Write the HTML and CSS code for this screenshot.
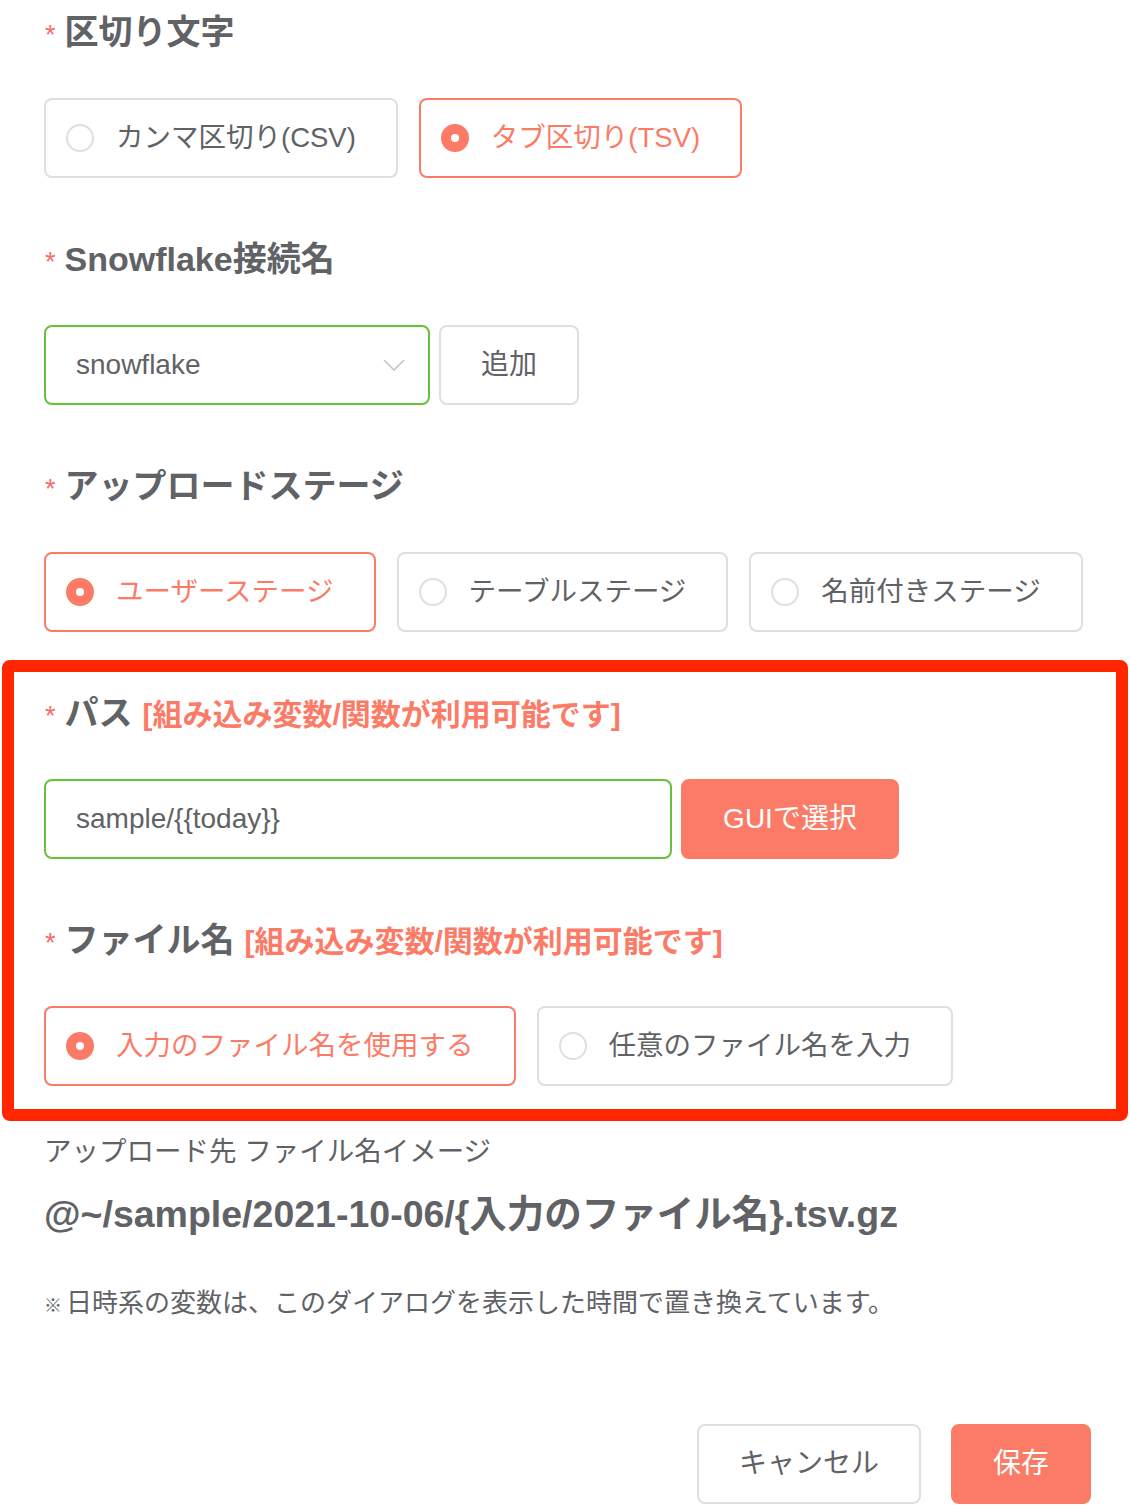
FILE: index.html
```html
<!DOCTYPE html>
<html lang="ja">
<head>
<meta charset="utf-8">
<title>アップロード設定</title>
<link rel="stylesheet" href="styles.css">
</head>
<body>
<div class="page">
  <div class="form-item">
    <div class="label"><span class="req">*</span>区切り文字</div>
    <div class="radio-group">
      <label class="radio"><span class="dot"></span><span class="radio-text">カンマ区切り(CSV)</span></label>
      <label class="radio is-checked"><span class="dot"></span><span class="radio-text">タブ区切り(TSV)</span></label>
    </div>
  </div>

  <div class="form-item">
    <div class="label"><span class="req">*</span>Snowflake接続名</div>
    <div class="control-row">
      <div class="select">
        <span class="field-text">snowflake</span>
        <svg class="chevron" width="22" height="12" viewBox="0 0 22 12"><polyline points="1,1 11,11 21,1" fill="none" stroke="#c0c4cc" stroke-width="1.6"/></svg>
      </div>
      <button class="btn">追加</button>
    </div>
  </div>

  <div class="form-item">
    <div class="label"><span class="req">*</span>アップロードステージ</div>
    <div class="radio-group">
      <label class="radio is-checked"><span class="dot"></span><span class="radio-text">ユーザーステージ</span></label>
      <label class="radio"><span class="dot"></span><span class="radio-text">テーブルステージ</span></label>
      <label class="radio"><span class="dot"></span><span class="radio-text">名前付きステージ</span></label>
    </div>
  </div>

  <div class="highlight">
    <div class="form-item">
      <div class="label"><span class="req">*</span>パス<span class="hint">[組み込み変数/関数が利用可能です]</span></div>
      <div class="control-row">
        <div class="input"><span class="field-text">sample/{{today}}</span></div>
        <button class="btn btn-primary btn-gui">GUIで選択</button>
      </div>
    </div>
    <div class="form-item last">
      <div class="label"><span class="req">*</span>ファイル名<span class="hint">[組み込み変数/関数が利用可能です]</span></div>
      <div class="radio-group">
        <label class="radio is-checked"><span class="dot"></span><span class="radio-text">入力のファイル名を使用する</span></label>
        <label class="radio"><span class="dot"></span><span class="radio-text">任意のファイル名を入力</span></label>
      </div>
    </div>
  </div>

  <div class="preview-label">アップロード先 ファイル名イメージ</div>
  <div class="preview-path">@~/sample/2021-10-06/{入力のファイル名}.tsv.gz</div>
  <div class="note"><span class="kome">※</span>日時系の変数は、このダイアログを表示した時間で置き換えています。</div>

  <div class="footer">
    <button class="btn">キャンセル</button>
    <button class="btn btn-primary">保存</button>
  </div>
</div>
</body>
</html>
```

FILE: styles.css
```css
* { box-sizing: border-box; }
html, body { margin: 0; padding: 0; background: #ffffff; }
body {
  width: 1130px;
  font-family: "Liberation Sans", "Noto Sans CJK JP", sans-serif;
  color: #606266;
}
.page { padding: 2px 39px 0 44px; }

.form-item { margin-bottom: 51px; }
.form-item.last { margin-bottom: 0; }

.label {
  height: 60px;
  line-height: 60px;
  margin-bottom: 36px;
  font-size: 34px;
  font-weight: bold;
  color: #606266;
  white-space: nowrap;
}
.req {
  color: #f56c6c;
  font-size: 27px;
  font-weight: normal;
  margin-right: 9px;
  margin-left: 1px;
}
.hint {
  color: #fc7b67;
  font-size: 30px;
  margin-left: 10px;
}

.radio-group { display: flex; gap: 21px; }
.radio {
  display: flex;
  align-items: center;
  height: 80px;
  padding: 0 40px 0 20px;
  border: 2px solid #dcdfe6;
  border-radius: 8px;
  font-size: 27.5px;
  color: #606266;
  white-space: nowrap;
  background: #fff;
}
.radio-text { line-height: 1; }
.dot {
  flex: none;
  width: 28px;
  height: 28px;
  margin-right: 22px;
  border: 2px solid #dcdfe6;
  border-radius: 50%;
  background: #fff;
}
.radio.is-checked { border-color: #fc7b67; color: #fc7b67; }
.radio.is-checked .dot {
  display: flex;
  align-items: center;
  justify-content: center;
  background: #fc7b67;
  border-color: #fc7b67;
}
.radio.is-checked .dot::after {
  content: "";
  width: 8px;
  height: 8px;
  border-radius: 50%;
  background: #fff;
}

.control-row { display: flex; gap: 9px; }
.field-text { line-height: 1; }
.select {
  width: 386px;
  height: 80px;
  display: flex;
  align-items: center;
  justify-content: space-between;
  padding: 0 23px 0 30px;
  border: 2px solid #67c23a;
  border-radius: 8px;
  font-size: 28px;
  color: #606266;
}
.chevron { display: block; }
.input {
  width: 628px;
  height: 80px;
  display: flex;
  align-items: center;
  padding: 0 30px;
  border: 2px solid #67c23a;
  border-radius: 8px;
  font-size: 28px;
  color: #606266;
}

.btn {
  height: 80px;
  padding: 0 40px;
  display: flex;
  align-items: center;
  justify-content: center;
  line-height: 1;
  border: 2px solid #dcdfe6;
  border-radius: 8px;
  background: #fff;
  color: #606266;
  font-family: "Liberation Sans", "Noto Sans CJK JP", sans-serif;
  font-size: 28px;
  white-space: nowrap;
}
.btn-primary {
  background: #fc7b67;
  border-color: #fc7b67;
  color: #ffffff;
}
.btn-gui { width: 218px; padding: 0; }

.highlight {
  margin: -23px -37px 0 -42px;
  padding: 11px 25px 23px 30px;
  border: 12px solid #ff2600;
  border-radius: 8px;
}

.preview-label {
  margin-top: 11px;
  line-height: 40px;
  font-size: 27.5px;
  color: #606266;
  white-space: nowrap;
}
.preview-path {
  margin-top: 17px;
  line-height: 50px;
  font-size: 37.5px;
  font-weight: bold;
  color: #606266;
  white-space: nowrap;
}
.note {
  margin-top: 46px;
  line-height: 36px;
  font-size: 26px;
  color: #606266;
  white-space: nowrap;
}
.kome { font-size: 18px; margin-right: 4px; }

.footer {
  margin-top: 100px;
  display: flex;
  justify-content: flex-end;
  gap: 30px;
}
```
